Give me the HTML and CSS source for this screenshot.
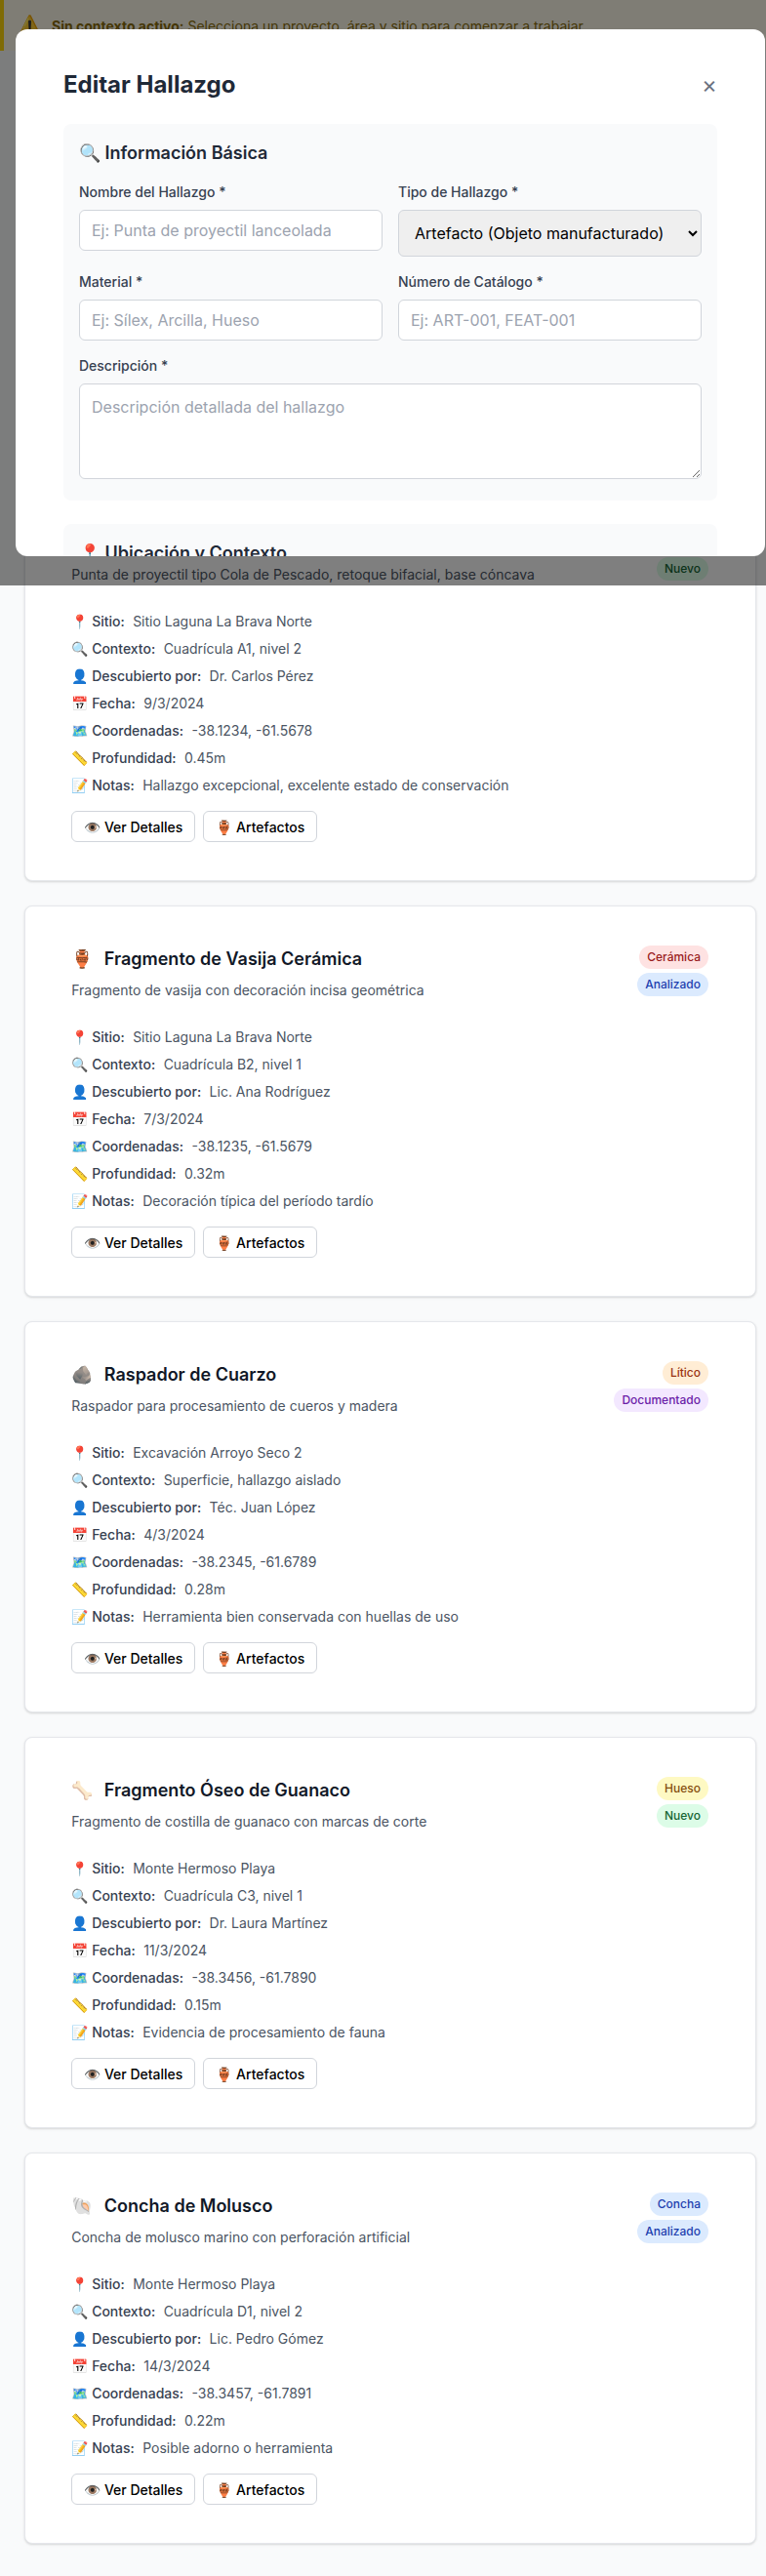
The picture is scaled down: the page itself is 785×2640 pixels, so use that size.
FILE: index.html
```html
<!DOCTYPE html>
<html lang="es">
<head>
<meta charset="utf-8">
<title>Hallazgos</title>
<link rel="stylesheet" href="styles.css">
</head>
<body>
<div class="alert"><span class="alert-icon">⚠️</span><p><strong>Sin contexto activo:</strong> Selecciona un proyecto, área y sitio para comenzar a trabajar.</p></div>
<main class="list">
<article class="card">
<header class="card-head"><div><h3></h3><p class="desc">Punta de proyectil tipo Cola de Pescado, retoque bifacial, base cóncava</p></div><div class="badges"><span class="badge litico">Lítico</span><span class="badge nuevo">Nuevo</span></div></header>
<ul class="rows">
<li>📍 <b>Sitio:</b> Sitio Laguna La Brava Norte</li>
<li>🔍 <b>Contexto:</b> Cuadrícula A1, nivel 2</li>
<li>👤 <b>Descubierto por:</b> Dr. Carlos Pérez</li>
<li>📅 <b>Fecha:</b> 9/3/2024</li>
<li>🗺️ <b>Coordenadas:</b> -38.1234, -61.5678</li>
<li>📏 <b>Profundidad:</b> 0.45m</li>
<li>📝 <b>Notas:</b> Hallazgo excepcional, excelente estado de conservación</li>
</ul>
<div class="actions"><button class="btn">👁️ Ver Detalles</button><button class="btn">🏺 Artefactos</button></div>
</article>
<article class="card">
<header class="card-head"><div><h3><span>🏺</span>Fragmento de Vasija Cerámica</h3><p class="desc">Fragmento de vasija con decoración incisa geométrica</p></div><div class="badges"><span class="badge ceramica">Cerámica</span><span class="badge analizado">Analizado</span></div></header>
<ul class="rows">
<li>📍 <b>Sitio:</b> Sitio Laguna La Brava Norte</li>
<li>🔍 <b>Contexto:</b> Cuadrícula B2, nivel 1</li>
<li>👤 <b>Descubierto por:</b> Lic. Ana Rodríguez</li>
<li>📅 <b>Fecha:</b> 7/3/2024</li>
<li>🗺️ <b>Coordenadas:</b> -38.1235, -61.5679</li>
<li>📏 <b>Profundidad:</b> 0.32m</li>
<li>📝 <b>Notas:</b> Decoración típica del período tardío</li>
</ul>
<div class="actions"><button class="btn">👁️ Ver Detalles</button><button class="btn">🏺 Artefactos</button></div>
</article>
<article class="card">
<header class="card-head"><div><h3><span>🪨</span>Raspador de Cuarzo</h3><p class="desc">Raspador para procesamiento de cueros y madera</p></div><div class="badges"><span class="badge litico">Lítico</span><span class="badge documentado">Documentado</span></div></header>
<ul class="rows">
<li>📍 <b>Sitio:</b> Excavación Arroyo Seco 2</li>
<li>🔍 <b>Contexto:</b> Superficie, hallazgo aislado</li>
<li>👤 <b>Descubierto por:</b> Téc. Juan López</li>
<li>📅 <b>Fecha:</b> 4/3/2024</li>
<li>🗺️ <b>Coordenadas:</b> -38.2345, -61.6789</li>
<li>📏 <b>Profundidad:</b> 0.28m</li>
<li>📝 <b>Notas:</b> Herramienta bien conservada con huellas de uso</li>
</ul>
<div class="actions"><button class="btn">👁️ Ver Detalles</button><button class="btn">🏺 Artefactos</button></div>
</article>
<article class="card">
<header class="card-head"><div><h3><span>🦴</span>Fragmento Óseo de Guanaco</h3><p class="desc">Fragmento de costilla de guanaco con marcas de corte</p></div><div class="badges"><span class="badge hueso">Hueso</span><span class="badge nuevo">Nuevo</span></div></header>
<ul class="rows">
<li>📍 <b>Sitio:</b> Monte Hermoso Playa</li>
<li>🔍 <b>Contexto:</b> Cuadrícula C3, nivel 1</li>
<li>👤 <b>Descubierto por:</b> Dr. Laura Martínez</li>
<li>📅 <b>Fecha:</b> 11/3/2024</li>
<li>🗺️ <b>Coordenadas:</b> -38.3456, -61.7890</li>
<li>📏 <b>Profundidad:</b> 0.15m</li>
<li>📝 <b>Notas:</b> Evidencia de procesamiento de fauna</li>
</ul>
<div class="actions"><button class="btn">👁️ Ver Detalles</button><button class="btn">🏺 Artefactos</button></div>
</article>
<article class="card">
<header class="card-head"><div><h3><span>🐚</span>Concha de Molusco</h3><p class="desc">Concha de molusco marino con perforación artificial</p></div><div class="badges"><span class="badge analizado">Concha</span><span class="badge analizado">Analizado</span></div></header>
<ul class="rows">
<li>📍 <b>Sitio:</b> Monte Hermoso Playa</li>
<li>🔍 <b>Contexto:</b> Cuadrícula D1, nivel 2</li>
<li>👤 <b>Descubierto por:</b> Lic. Pedro Gómez</li>
<li>📅 <b>Fecha:</b> 14/3/2024</li>
<li>🗺️ <b>Coordenadas:</b> -38.3457, -61.7891</li>
<li>📏 <b>Profundidad:</b> 0.22m</li>
<li>📝 <b>Notas:</b> Posible adorno o herramienta</li>
</ul>
<div class="actions"><button class="btn">👁️ Ver Detalles</button><button class="btn">🏺 Artefactos</button></div>
</article>
</main>
<div class="overlay">
<section class="modal">
<header class="modal-head"><h2>Editar Hallazgo</h2><button class="close">×</button></header>
<div class="panel">
<h4>🔍 Información Básica</h4>
<div class="grid">
<label class="field"><span>Nombre del Hallazgo *</span><input type="text" placeholder="Ej: Punta de proyectil lanceolada"></label>
<label class="field"><span>Tipo de Hallazgo *</span><select><option>Artefacto (Objeto manufacturado)</option></select></label>
<label class="field"><span>Material *</span><input type="text" placeholder="Ej: Sílex, Arcilla, Hueso"></label>
<label class="field"><span>Número de Catálogo *</span><input type="text" placeholder="Ej: ART-001, FEAT-001"></label>
</div>
<label class="field wide"><span>Descripción *</span><textarea placeholder="Descripción detallada del hallazgo"></textarea></label>
</div>
<div class="panel">
<h4>📍 Ubicación y Contexto</h4>
</div>
</section>
</div>
</body>
</html>
```
FILE: styles.css
```css
* { box-sizing: border-box; }
html, body { margin: 0; padding: 0; }
body {
  position: relative;
  min-height: 2640px;
  background: #f9fafb;
  font-family: Inter, "Noto Sans", sans-serif;
  color: #111827;
}
.alert {
  display: flex;
  align-items: center;
  gap: 10px;
  height: 52px;
  padding: 0 16px 0 14px;
  border-left: 4px solid #ffd60a;
  background: #fffbeb;
  color: #8a6d0a;
  font-size: 14px;
}
.alert p { margin: 0; }
.alert-icon { font-size: 20px; }
.list { display: flex; flex-direction: column; gap: 25px; padding: 0 10px 0 25px; margin-top: 450px; }
.card {
  height: 401px;
  padding: 40px 48px 40px 47.2px;
  background: #fff;
  border: 1px solid #e5e7eb;
  border-radius: 8px;
  box-shadow: 0 1px 3px rgba(0,0,0,.1), 0 1px 2px rgba(0,0,0,.06);
}
.card-head { display: flex; justify-content: space-between; align-items: flex-start; }
.card-head h3 { display: flex; gap: 11.6px; min-height: 28px; margin: 0; font-size: 18px; line-height: 28px; font-weight: 600; color: #111827; }
.desc { margin: 8px 0 0; font-size: 14px; line-height: 20px; color: #4b5563; }
.badges { display: flex; flex-direction: column; align-items: flex-end; gap: 4px; }
.badge { padding: 4px 8px; font-size: 12px; line-height: 16px; font-weight: 500; border-radius: 12px; }
.ceramica { background: #fee2e2; color: #991b1b; }
.analizado { background: #dbeafe; color: #1e40af; }
.litico { background: #ffedd5; color: #9a3412; }
.documentado { background: #f3e8ff; color: #6b21a8; }
.hueso { background: #fef9c3; color: #854d0e; }
.nuevo { background: #dcfce7; color: #166534; }
.rows { list-style: none; margin: 24px 0 0; padding: 0; }
.rows li { height: 28px; font-size: 14px; line-height: 28px; color: #4b5563; white-space: pre-wrap; }
.rows b { font-weight: 500; color: #374151; margin-right: 4.5px; }
.actions { display: flex; gap: 8px; margin-top: 12px; }
.btn {
  height: 32px;
  padding: 0 12px;
  background: #fff;
  border: 1px solid #d1d5db;
  border-radius: 6px;
  font-family: inherit;
  font-size: 14px;
  font-weight: 500;
  color: #000;
}
.overlay {
  position: absolute;
  top: 0;
  left: 0;
  width: 785px;
  height: 600px;
  background: rgba(0,0,0,.5);
  padding: 30px 1px 30px 16px;
}
.modal {
  height: 540px;
  padding: 41px 49px 0;
  overflow: hidden;
  background: #fff;
  border-radius: 12px;
}
.modal-head { display: flex; justify-content: space-between; align-items: center; margin-bottom: 24px; }
.modal-head h2 { margin: 0; font-size: 24px; line-height: 32px; font-weight: 700; color: #1f2937; }
.close { border: 0; background: none; padding: 0; font-family: inherit; font-size: 24px; line-height: 32px; color: #6b7280; }
.panel { padding: 16px 16px 22px; background: #f9fafb; border-radius: 8px; margin-bottom: 24px; }
.panel h4 { margin: 0 0 16px; font-size: 18px; line-height: 28px; font-weight: 600; color: #1f2937; }
.grid { display: grid; grid-template-columns: 1fr 1fr; gap: 16px; align-items: start; }
.field { display: block; }
.field span { display: block; margin-bottom: 8px; font-size: 14px; line-height: 20px; font-weight: 500; color: #374151; }
.wide { margin-top: 16px; }
input, textarea {
  display: block;
  width: 100%;
  padding: 8px 12px;
  border: 1px solid #d1d5db;
  border-radius: 6px;
  background: #fff;
  font-family: inherit;
  font-size: 16px;
}
input { height: 42px; }
textarea { height: 98px; padding: 13px 12px; }
::placeholder { color: #9ca3af; opacity: 1; }
select {
  display: block;
  width: 100%;
  height: 48px;
  padding: 8px 12px;
  border: 1px solid #d1d5db;
  border-radius: 6px;
  font-family: inherit;
  font-size: 16px;
  color: #000;
}
```
